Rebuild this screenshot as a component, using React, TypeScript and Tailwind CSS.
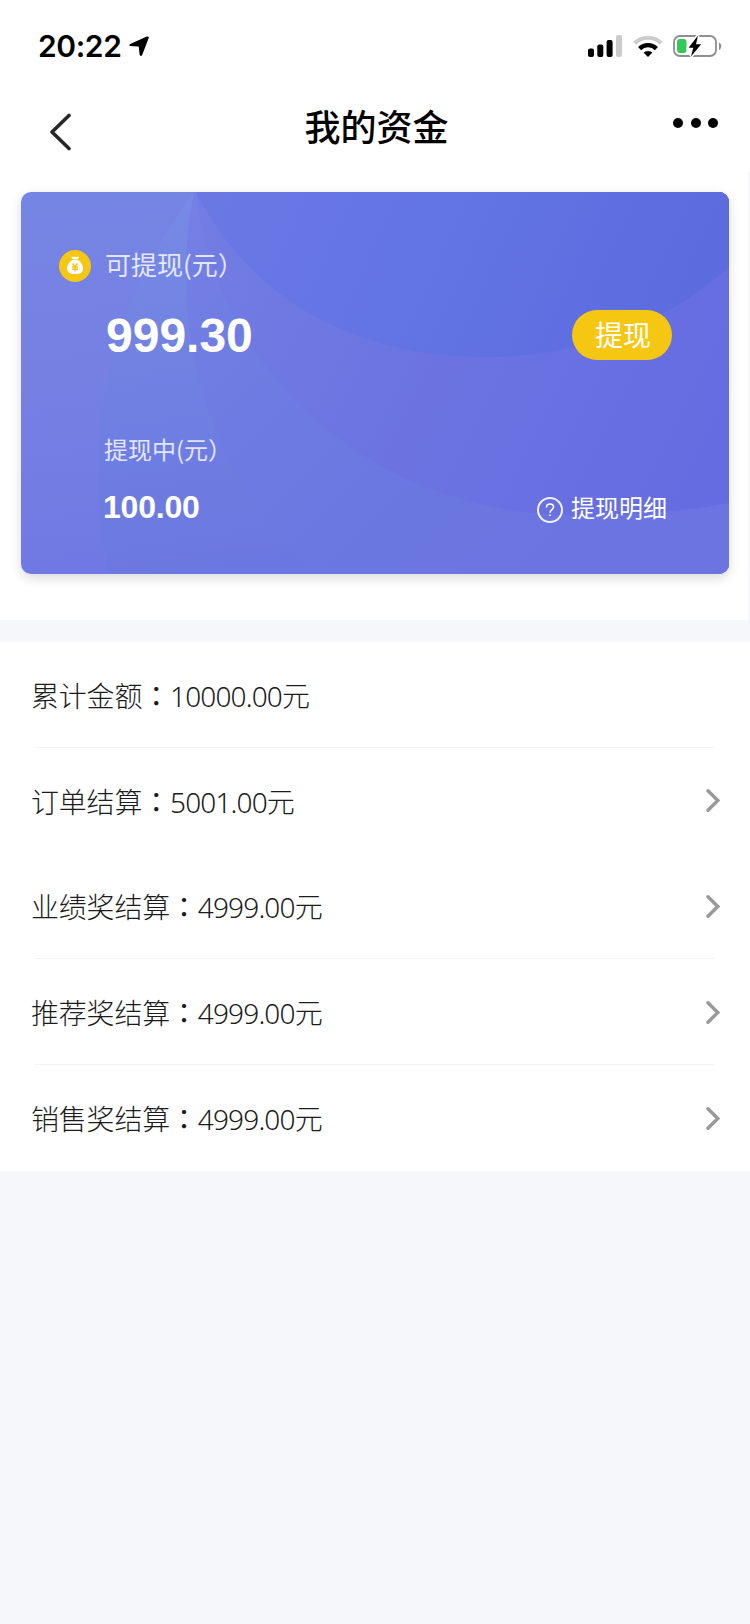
import clsx from "clsx";

const cjk = "font-['Noto_Sans_CJK_SC',sans-serif]";

const rows = [
  { label: "累计金额", amount: "10000.00", link: false, divider: true },
  { label: "订单结算", amount: "5001.00", link: true, divider: false },
  { label: "业绩奖结算", amount: "4999.00", link: true, divider: true },
  { label: "推荐奖结算", amount: "4999.00", link: true, divider: true },
  { label: "销售奖结算", amount: "4999.00", link: true, divider: false },
];

function StatusBar() {
  return (
    <div className="flex h-[92px] items-center justify-between pl-[38px] pr-[28px]">
      <div className="flex items-center gap-[8px]">
        <span className="font-['Inter',sans-serif] text-[30px] leading-none font-semibold tracking-[-0.4px] text-black">
          20:22
        </span>
        <svg width="21" height="21" viewBox="0 0 21 21">
          <path
            d="M1.200 8 17.800.600c1.500-.6 2.300.2 1.800 1.600L13.300 18.700c-.7 1.700-2.500 1.500-2.700-.2L9.800 11.300c0-.5-.2-.7-.7-.7L1.500 10.100C0 10 0 8.500 1.200 8Z"
            fill="#000"
          />
        </svg>
      </div>
      <div className="flex items-center gap-[10.500px]">
        <svg width="34" height="22" viewBox="0 0 34 22">
          <rect x="0" y="13.500" width="6" height="8.500" rx="2" />
          <rect x="9.300" y="9.500" width="6" height="12.500" rx="2" />
          <rect x="18.600" y="5" width="6" height="17" rx="2" />
          <rect x="28" y="0" width="6" height="22" rx="2" fill="#cbcbcb" />
        </svg>
        <svg width="30" height="22" viewBox="0 0 30 22" fill="none">
          <path d="M1.800 8.200a18.700 18.700 0 0 1 26.400 0" stroke="#cbcbcb" strokeWidth="4.200" />
          <path d="M6.600 13.600a12 12 0 0 1 16.800 0" stroke="#000" strokeWidth="4.400" />
          <path d="M10.500 17.600a6.800 6.800 0 0 1 9 0L15 22Z" fill="#000" />
        </svg>
        <svg width="49" height="24" viewBox="0 0 49 24" fill="none">
          <rect x="1" y="2" width="42" height="20" rx="6" stroke="#8e8e8e" strokeWidth="1.800" />
          <path d="M46 8.500c3 1.200 3 6.300 0 7.500Z" fill="#8e8e8e" />
          <rect x="4" y="5" width="9.500" height="14" rx="3" fill="#34c759" />
          <path
            d="M25 1.500 15.600 13.800h4.700L18 22.500 28.200 10.200h-5.200Z"
            fill="#000"
            stroke="#fff"
            strokeWidth="3"
            paintOrder="stroke"
          />
        </svg>
      </div>
    </div>
  );
}

function NavBar() {
  return (
    <div className="grid h-[80px] grid-cols-[1fr_auto_1fr] items-center px-[31px]">
      <svg className="ml-[18px]" width="24" height="38" viewBox="0 0 24 38" fill="none">
        <path
          d="M20 2.500 3 19 20 35.500"
          stroke="#272727"
          strokeWidth="3.600"
          strokeLinecap="round"
          strokeLinejoin="round"
        />
      </svg>
      <h1 className={clsx(cjk, "-mt-[14px] ml-[3px] text-[36px] leading-none font-medium text-black")}>
        我的资金
      </h1>
      <div className="-mt-[18px] mr-px flex gap-[7.500px] justify-self-end">
        <span className="size-[10px] rounded-full bg-black" />
        <span className="size-[10px] rounded-full bg-black" />
        <span className="size-[10px] rounded-full bg-black" />
      </div>
    </div>
  );
}

function CardBackground() {
  return (
    <svg
      className="absolute inset-0"
      width="708"
      height="382"
      viewBox="21 192 708 382"
      fill="none"
    >
      <defs>
        <linearGradient id="base" x1="21" y1="192" x2="60" y2="574" gradientUnits="userSpaceOnUse">
          <stop stopColor="#7585e4" />
          <stop offset="0.500" stopColor="#7680e3" />
          <stop offset="1" stopColor="#7079e3" />
        </linearGradient>
        <linearGradient id="wave1" x1="190" y1="192" x2="250" y2="574" gradientUnits="userSpaceOnUse">
          <stop stopColor="#778ae4" />
          <stop offset="0.500" stopColor="#7080e2" />
          <stop offset="1" stopColor="#6b77e0" />
        </linearGradient>
        <linearGradient id="wave2" x1="190" y1="192" x2="600" y2="574" gradientUnits="userSpaceOnUse">
          <stop stopColor="#7480e4" />
          <stop offset="0.500" stopColor="#6b79e1" />
          <stop offset="1" stopColor="#6b74e1" />
        </linearGradient>
        <linearGradient id="wave3" x1="196" y1="230" x2="700" y2="480" gradientUnits="userSpaceOnUse">
          <stop stopColor="#717de3" />
          <stop offset="0.500" stopColor="#6c73e1" />
          <stop offset="1" stopColor="#656ce1" />
        </linearGradient>
        <linearGradient id="wave4" x1="196" y1="192" x2="640" y2="400" gradientUnits="userSpaceOnUse">
          <stop stopColor="#6b78e4" />
          <stop offset="0.450" stopColor="#6374e4" />
          <stop offset="1" stopColor="#5c6cdf" />
        </linearGradient>
      </defs>
      <rect x="21" y="192" width="708" height="382" fill="url(#base)" />
      <path
        d="M194 192C130 280 98 370 98 470C98 510 102 545 109 574H729V192Z"
        fill="url(#wave1)"
      />
      <path
        d="M194 192C188 220 186 248 186 275C186 390 228 492 314 574H729V192Z"
        fill="url(#wave2)"
      />
      <path
        d="M196 192C215 370 370 515 575 515C630 515 685 512 729 503V192Z"
        fill="url(#wave3)"
      />
      <path d="M196 192C250 300 355 357 485 357C580 357 662 327 729 267V192Z" fill="url(#wave4)" />
    </svg>
  );
}

function MoneyBag() {
  return (
    <svg width="32" height="32" viewBox="0 0 32 32" fill="none">
      <circle cx="16" cy="16" r="16" fill="#f5c712" />
      <path d="M13 6.800h6.400c.5 0 .7.500.4.900l-1.400 1.600h-4.400l-1.400-1.600c-.3-.4-.1-.9.400-.9Z" fill="#fff" />
      <path
        d="M13.500 9.800h5.200c3.300 2 5.300 5.500 5.300 8.800 0 3.700-2.600 5.400-5.500 5.400h-4.900c-2.900 0-5.500-1.700-5.500-5.400 0-3.300 2-6.800 5.400-8.800Z"
        fill="#fff"
      />
      <path
        d="m13.500 13.500 2.500 3 2.500-3M13 17h6M13 19.300h6M16 16.500v5"
        stroke="#f5c712"
        strokeWidth="1.500"
      />
    </svg>
  );
}

function BalanceCard() {
  return (
    <div className="relative h-[382px] w-[708px] overflow-hidden rounded-[10px] text-white">
      <CardBackground />
      <div className="relative flex h-full flex-col pl-[38px]">
        <div className="mt-[58px] flex h-[32px] items-center gap-[14px]">
          <MoneyBag />
          <span className={clsx(cjk, "-mt-[5px] text-[26px] leading-none text-white/80")}>
            可提现(元）
          </span>
        </div>
        <div className="mt-[27px] flex h-[51px] items-center justify-between pr-[57px] pl-[47px]">
          <span className="pt-[2px] font-['Liberation_Sans',sans-serif] text-[48px] leading-none font-bold">
            999.30
          </span>
          <button
            className={clsx(
              cjk,
              "flex h-[50px] w-[100px] items-center justify-center rounded-full bg-[#f5c712] pb-[2px] pl-[2px] text-[28px] leading-none",
            )}
          >
            提现
          </button>
        </div>
        <span
          className={clsx(cjk, "mt-[77px] ml-[45px] text-[24px] leading-none text-white/80")}
        >
          提现中(元）
        </span>
        <div className="mt-[27px] flex h-[40px] items-center justify-between pr-[62px] pl-[44px]">
          <span className="-mt-[3px] font-['Liberation_Sans',sans-serif] text-[32px] leading-none font-bold tracking-[-0.2px]">
            100.00
          </span>
          <div className="flex items-center gap-[8px] pt-[3px]">
            <span className="flex size-[26px] items-center justify-center rounded-full border-2 border-white/90">
              <svg width="10" height="14" viewBox="0 0 10 15" fill="none">
                <path
                  d="M1.200 4.700C1.200 2.400 2.800 1 5 1s3.800 1.400 3.800 3.400C8.800 7 5 7.200 5 10.500M5 12.300v1.700"
                  stroke="#fff"
                  strokeWidth="1.700"
                />
              </svg>
            </span>
            <span className={clsx(cjk, "-mt-[5px] text-[24px] leading-none")}>提现明细</span>
          </div>
        </div>
      </div>
    </div>
  );
}

function Row({ label, amount, link, divider }: (typeof rows)[number]) {
  return (
    <div
      className={clsx(
        "relative flex items-center justify-between pr-[30px] pl-[31px]",
        label === "订单结算" ? "h-[105px]" : "h-[106px]",
      )}
    >
      <div
        className={clsx(
          cjk,
          "flex items-center text-[28px] leading-none font-light tracking-[-0.2px] text-[#1c1c1c]",
        )}
      >
        <span>{label}</span>
        <span className="font-['Noto_Sans_CJK_TC',sans-serif] font-normal">：</span>
        <span className="pt-[2px] font-['Noto_Sans',sans-serif] tracking-[-0.85px]">{amount}</span>
        <span>元</span>
      </div>
      {link && (
        <svg width="14" height="23" viewBox="0 0 14 23" fill="none">
          <path d="M2 1.800 11.800 11.500 2 21.200" stroke="#999" strokeWidth="3.400" strokeLinecap="round" />
        </svg>
      )}
      {divider && <div className="absolute right-[35px] bottom-0 left-[35px] h-px bg-[#f3f3f3]" />}
    </div>
  );
}

export default function App() {
  return (
    <div className="h-[1624px] w-[750px] bg-[#f5f7fb]">
      <div className="h-[172px] bg-white">
        <StatusBar />
        <NavBar />
      </div>
      <div className="h-[448px] w-[748px] bg-white pt-[20px] pl-[21px]">
        <div className="w-[708px] rounded-[10px] shadow-[0_4px_12px_rgba(0,0,0,0.15)]">
          <BalanceCard />
        </div>
      </div>
      <div className="mt-[22px] bg-white">
        {rows.map((row) => (
          <Row key={row.label} {...row} />
        ))}
      </div>
    </div>
  );
}
